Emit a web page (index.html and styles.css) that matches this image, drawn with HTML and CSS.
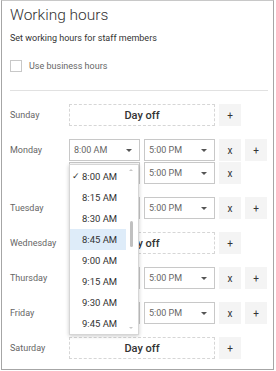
FILE: index.html
```html
<!DOCTYPE html>
<html lang="en">
<head>
    <meta charset="UTF-8">
    <title>Working hours</title>
    <link rel="stylesheet" href="styles.css">
</head>
<body>
    <div class="panel">
        <h1 class="title">Working hours</h1>
        <p class="subtitle">Set working hours for staff members</p>
        <label class="check"><span class="box"></span>Use business hours</label>
        <div class="divider"></div>

        <div class="days">
            <div class="day">
                <div class="day-name">Sunday</div>
                <div class="slots">
                    <div class="slot">
                        <div class="day-off">Day off</div>
                        <button class="btn">+</button>
                    </div>
                </div>
            </div>

            <div class="day">
                <div class="day-name">Monday</div>
                <div class="slots">
                    <div class="slot">
                        <div class="select open">8:00 AM<span class="caret"></span>
                            <div class="menu">
                                <div class="menu-item checked"><span class="tick">&#10003;</span>8:00 AM</div>
                                <div class="menu-item">8:15 AM</div>
                                <div class="menu-item">8:30 AM</div>
                                <div class="menu-item active">8:45 AM</div>
                                <div class="menu-item">9:00 AM</div>
                                <div class="menu-item">9:15 AM</div>
                                <div class="menu-item">9:30 AM</div>
                                <div class="menu-item">9:45 AM</div>
                                <span class="scroll-up"></span>
                                <span class="scroll-thumb"></span>
                                <span class="scroll-down"></span>
                            </div>
                        </div>
                        <div class="select">5:00 PM<span class="caret"></span></div>
                        <button class="btn">x</button>
                        <button class="btn">+</button>
                    </div>
                    <div class="slot">
                        <!-- hidden under the open menu -->
                        <div class="select"></div>
                        <div class="select">5:00 PM<span class="caret"></span></div>
                        <button class="btn">x</button>
                    </div>
                </div>
            </div>

            <div class="day">
                <div class="day-name">Tuesday</div>
                <div class="slots">
                    <div class="slot">
                        <div class="select"></div>
                        <div class="select">5:00 PM<span class="caret"></span></div>
                        <button class="btn">x</button>
                        <button class="btn">+</button>
                    </div>
                </div>
            </div>

            <div class="day">
                <div class="day-name">Wednesday</div>
                <div class="slots">
                    <div class="slot">
                        <div class="day-off">Day off</div>
                        <button class="btn">+</button>
                    </div>
                </div>
            </div>

            <div class="day">
                <div class="day-name">Thursday</div>
                <div class="slots">
                    <div class="slot">
                        <div class="select"></div>
                        <div class="select">5:00 PM<span class="caret"></span></div>
                        <button class="btn">x</button>
                        <button class="btn">+</button>
                    </div>
                </div>
            </div>

            <div class="day">
                <div class="day-name">Friday</div>
                <div class="slots">
                    <div class="slot">
                        <div class="select"></div>
                        <div class="select">5:00 PM<span class="caret"></span></div>
                        <button class="btn">x</button>
                        <button class="btn">+</button>
                    </div>
                </div>
            </div>

            <div class="day">
                <div class="day-name">Saturday</div>
                <div class="slots">
                    <div class="slot">
                        <div class="day-off">Day off</div>
                        <button class="btn">+</button>
                    </div>
                </div>
            </div>
        </div>
    </div>
</body>
</html>
```

FILE: styles.css
```css
body {
    margin: 0;
    font-family: Roboto, Lato, sans-serif;
    color: #333;
    background-color: #ffffff;
}
.panel {
    margin-left: 1px;
    width: 273px;
    height: 370px;
    box-sizing: border-box;
    border: 1px solid #a6a6a6;
    border-top-color: #c8c8c8;
    padding: 0 5px 0 8px;
    overflow: hidden;
}
.title {
    margin: 3px 0 0;
    font-size: 15.5px;
    font-weight: 300;
    line-height: 22px;
    color: #333;
}
.subtitle {
    margin: 5px 0 0;
    font-size: 9px;
    line-height: 14px;
    color: #333;
}
.check {
    display: flex;
    align-items: center;
    gap: 7px;
    margin-top: 14px;
    font-size: 9px;
    line-height: 14px;
    color: #666;
}
.box {
    width: 10px;
    height: 10px;
    border: 1px solid #c8c8c8;
}
.divider {
    height: 1px;
    margin-top: 17px;
    background-color: #e1e1e1;
}
.days {
    display: flex;
    flex-direction: column;
    gap: 13px;
    margin-top: 13px;
}
.day {
    display: flex;
    align-items: flex-start;
}
.day-name {
    width: 59px;
    flex-shrink: 0;
    font-size: 9px;
    line-height: 22px;
    color: #666;
}
.slots {
    display: flex;
    flex-direction: column;
    gap: 1px;
}
.slot {
    display: flex;
    gap: 4px;
    height: 22px;
}
.select {
    position: relative;
    width: 71px;
    box-sizing: border-box;
    border: 1px solid #c8c8c8;
    padding-left: 4px;
    font-size: 9px;
    line-height: 20px;
    color: #666;
}
.caret {
    position: absolute;
    right: 7px;
    top: 9px;
    border-left: 3.5px solid transparent;
    border-right: 3.5px solid transparent;
    border-top: 3.5px solid #555;
}
.day-off {
    width: 146px;
    box-sizing: border-box;
    border: 1px dashed #d6d6d6;
    text-align: center;
    font-size: 11px;
    font-weight: 500;
    line-height: 21px;
    color: #333;
}
.btn {
    width: 22px;
    height: 22px;
    padding: 0;
    border: none;
    background-color: #f4f4f4;
    font-family: Roboto, sans-serif;
    font-size: 10px;
    color: #333;
}
.menu {
    position: absolute;
    top: 24px;
    left: -1px;
    z-index: 10;
    width: 70px;
    box-sizing: border-box;
    background-color: #ffffff;
    border: 1px solid #d6d6d6;
    box-shadow: 0 1px 4px rgba(0,0,0,0.22);
    padding: 1px 0 0;
}
.menu-item {
    height: 21px;
    width: 44px;
    padding-left: 12px;
    font-size: 9.5px;
    line-height: 21px;
    color: #333;
    position: relative;
}
.menu-item.active {
    background-color: #deecf9;
}
.tick {
    position: absolute;
    left: 2px;
    font-size: 9px;
}
.scroll-up, .scroll-down {
    position: absolute;
    right: 5px;
    border-left: 2.5px solid transparent;
    border-right: 2.5px solid transparent;
}
.scroll-up {
    top: 4px;
    border-bottom: 2.5px solid #c8c8c8;
}
.scroll-down {
    bottom: 5px;
    border-top: 2.5px solid #c8c8c8;
}
.scroll-thumb {
    position: absolute;
    right: 5px;
    top: 56px;
    width: 3px;
    height: 26px;
    border-radius: 2px;
    background-color: #c0c0c0;
}
```
